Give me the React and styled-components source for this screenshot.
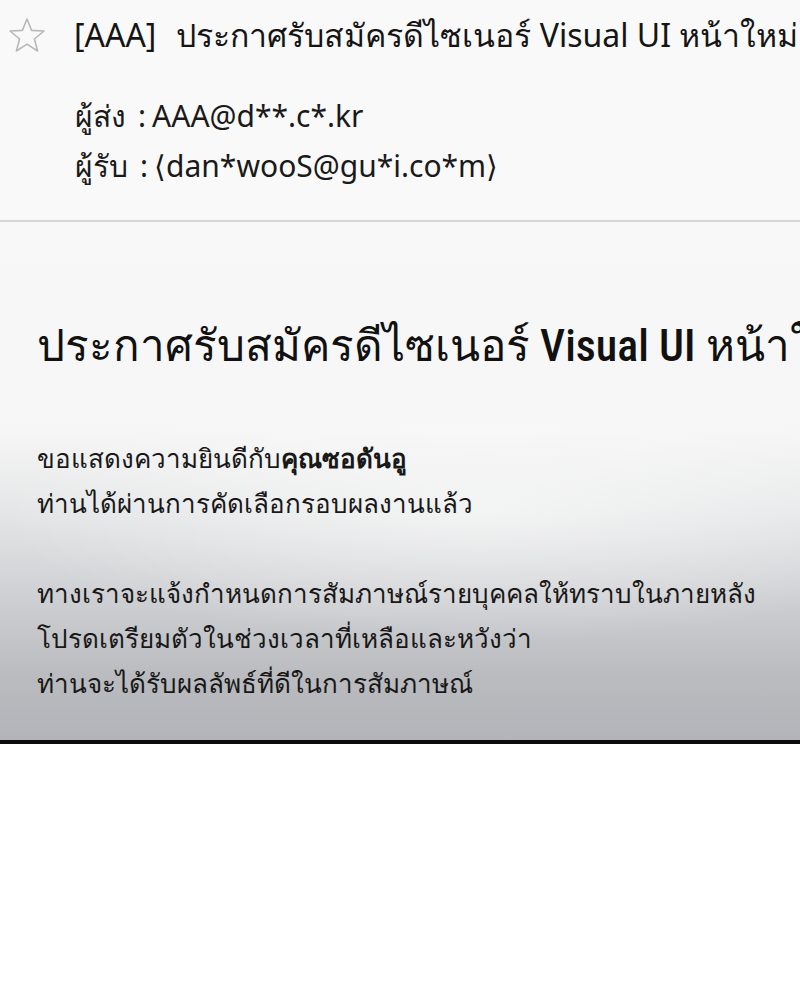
import React from "react";
import styled, { createGlobalStyle } from "styled-components";

const Global = createGlobalStyle`
  html, body { margin: 0; padding: 0; background: #ffffff; }
  body { font-family: "Noto Sans", sans-serif; color: #111; }
  * { box-sizing: border-box; }
`;

const Page = styled.div`
  width: 800px;
  overflow: hidden;
`;

const Header = styled.header`
  background: #f9f9f9;
  border-bottom: 2px solid #d6d6d6;
  height: 222px;
  padding: 14px 0 0 8px;
`;

const SubjectRow = styled.div`
  display: flex;
  align-items: center;
  gap: 28px;
  white-space: nowrap;
`;

const Subject = styled.h1`
  margin: 0;
  font-size: 32px;
  font-weight: 400;
  white-space: nowrap;
  line-height: 42px;
  color: #151515;
`;

const Tag = styled.span`
  margin-right: 20px;
`;

const Meta = styled.div`
  margin: 38px 0 0 67px;
  display: flex;
  flex-direction: column;
  gap: 6px;
`;

const MetaLine = styled.div`
  font-size: 30px;
  line-height: 44px;
  white-space: nowrap;
  color: #1a1a1a;
`;

const Colon = styled.span`
  margin: 0 6px 0 12px;
`;

const Body = styled.section`
  height: 522px;
  border-bottom: 4px solid #0c0c0c;
  background:
    radial-gradient(ellipse 60% 25% at 60% 56%, rgba(255,255,255,0.55), rgba(255,255,255,0) 100%),
    linear-gradient(to bottom, #f8f8f8 0%, #f6f6f6 40%, #e6e7e8 55%, #cfd0d3 72%, #babbbf 88%, #b2b4b9 100%);
  padding: 96px 0 0 37px;
`;

const Heading = styled.h2`
  margin: 0;
  font-family: "Roboto Condensed", "Noto Sans", sans-serif;
  font-size: 44px;
  font-weight: 500;
  white-space: nowrap;
  line-height: 56px;
  color: #111;
`;

const Paragraph = styled.p`
  margin: ${(p) => p.$top}px 0 0;
  font-size: 26px;
  line-height: 45px;
  color: #181818;
`;

const Line = styled.span`
  display: block;
  white-space: nowrap;
`;

const Strong = styled.span`
  font-weight: 600;
`;

const Star = () => (
  <svg width="38" height="36" viewBox="0 0 38 36" aria-hidden="true">
    <polygon
      points="19,2 23.6,13.4 36,14 26.4,22 29.6,34 19,27.2 8.4,34 11.6,22 2,14 14.4,13.4"
      fill="none"
      stroke="#b8b8b8"
      strokeWidth="1.6"
      strokeLinejoin="round"
    />
  </svg>
);

export default function App() {
  return (
    <Page>
      <Global />
      <Header>
        <SubjectRow>
          <Star />
          <Subject>
            <Tag>[AAA]</Tag>ประกาศรับสมัครดีไซเนอร์ Visual UI หน้าใหม่
          </Subject>
        </SubjectRow>
        <Meta>
          <MetaLine>
            ผู้ส่ง<Colon>:</Colon>AAA@d**.c*.kr
          </MetaLine>
          <MetaLine>
            ผู้รับ<Colon>:</Colon>⟨dan*wooS@gu*i.co*m⟩
          </MetaLine>
        </Meta>
      </Header>
      <Body>
        <Heading>ประกาศรับสมัครดีไซเนอร์ Visual UI หน้าใหม่</Heading>
        <Paragraph $top={62}>
          <Line>
            ขอแสดงความยินดีกับ<Strong>คุณซอดันอู</Strong>
          </Line>
          <Line>ท่านได้ผ่านการคัดเลือกรอบผลงานแล้ว</Line>
        </Paragraph>
        <Paragraph $top={45}>
          <Line>ทางเราจะแจ้งกำหนดการสัมภาษณ์รายบุคคลให้ทราบในภายหลัง</Line>
          <Line>โปรดเตรียมตัวในช่วงเวลาที่เหลือและหวังว่า</Line>
          <Line>ท่านจะได้รับผลลัพธ์ที่ดีในการสัมภาษณ์</Line>
        </Paragraph>
      </Body>
    </Page>
  );
}
